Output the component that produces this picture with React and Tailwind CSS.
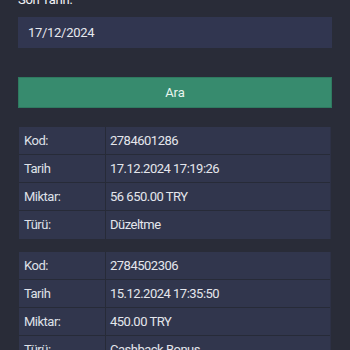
import React from 'react';

const records = [
    { kod: '2784601286', tarih: '17.12.2024 17:19:26', miktar: '56 650.00 TRY', turu: 'Düzeltme' },
    { kod: '2784502306', tarih: '15.12.2024 17:35:50', miktar: '450.00 TRY', turu: 'Cashback Bonus' },
];

function Row({ label, value }) {
    return (
        <div className="flex h-[28px] border-b border-[#272b38] last:border-b-0">
            <div className="w-[87px] flex items-center pl-[5px] border-r border-[#272b38] text-[#dfe1e8]">{label}</div>
            <div className="flex-1 flex items-center pl-[4px] text-[#e4e6ec]">{value}</div>
        </div>
    );
}

export default function App() {
    return (
        <div className="w-[350px] h-[350px] overflow-hidden bg-[#292c38] text-[13px]" style={{ fontFamily: 'Roboto, "Liberation Sans", sans-serif' }}>
            <div className="px-[18px] -mt-[10px]">
                {/* Date filter */}
                <div className="text-[#f2f3f6] text-[13px] leading-[19px] tracking-[-0.3px]">Son Tarih:</div>
                <div className="mt-[8px] h-[31px] bg-[#313650] flex items-center pl-[10px] text-[13px] tracking-[-0.3px] text-[#e6e8ee]">
                    17/12/2024
                </div>

                <button className="mt-[29px] w-full h-[31px] bg-[#378b6e] border border-[#2f7a60] text-[#e9f5ef] text-[13px]">
                    Ara
                </button>

                {/* Results */}
                <div className="mt-[19px] flex flex-col gap-[13px] px-[1px] tracking-[-0.5px]">
                    {records.map((r) => (
                        <div key={r.kod} className="bg-[#31364d] border-r border-[#2d3145]">
                            <Row label="Kod:" value={r.kod} />
                            <Row label="Tarih" value={r.tarih} />
                            <Row label="Miktar:" value={r.miktar} />
                            <Row label="Türü:" value={r.turu} />
                        </div>
                    ))}
                </div>
            </div>
        </div>
    );
}
